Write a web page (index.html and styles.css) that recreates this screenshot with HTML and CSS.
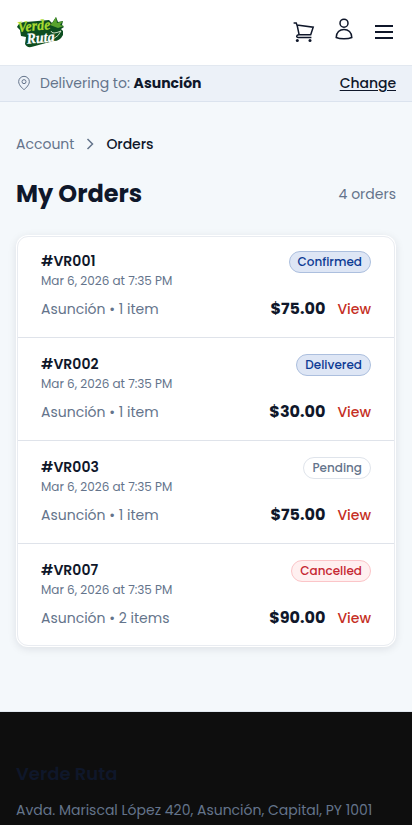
FILE: index.html
```html
<!DOCTYPE html>
<html lang="en">
<head>
<meta charset="utf-8">
<meta name="viewport" content="width=device-width, initial-scale=1">
<title>My Orders</title>
<link rel="stylesheet" href="styles.css">
</head>
<body>
<header class="header">
  <svg class="logo" width="50" height="34" viewBox="0 0 50 34">
    <path d="M1 11Q3 6 10 6L33 4 36 7 40 1 42 6 47 5 46 9 48 11 45 13 47 15 47 19Q44 25 38 25L30 27 19 30Q11 33 9 28L10 21 5 20 4 14Z" fill="#0d4d20"/>
    <path d="M34 9 37 6 40 1 41 7 47 5 44 9 48 10 42 12Z" fill="#58a32e"/>
    <path d="M21 27Q33 26 37 23 43 20 45 15 36 19 35 15" fill="none" stroke="#dcebd3" stroke-width=".9"/>
    <g transform="rotate(-5 20 16)">
      <text class="logo-top" x="2" y="14.5" textLength="33" lengthAdjust="spacingAndGlyphs">Verde</text>
      <text class="logo-bottom" x="10" y="27" textLength="28" lengthAdjust="spacingAndGlyphs">Ruta</text>
    </g>
  </svg>
  <nav class="tools">
    <svg class="icon cart" width="24" height="24" viewBox="0 0 24 24"><path d="M1.6 3h2.6l1.1 3 1.8 8.7M4.8 5l16.4 2.2-2.5 7.5H7.1c-3 0-3 2.7-1 2.7h13.3"/><circle cx="5.3" cy="20.5" r="1.5"/><circle cx="18" cy="20.5" r="1.5"/></svg>
    <svg class="icon user" width="24" height="24" viewBox="0 0 24 24"><circle cx="12" cy="6.2" r="4"/><path d="M4.2 20.5c0-5.2 3.5-8.1 7.8-8.1s7.8 2.9 7.8 8.1c-3.8 1.8-11.8 1.8-15.6 0Z"/></svg>
    <svg class="icon menu" width="24" height="24" viewBox="0 0 24 24"><path d="M3 6h18M3 12h18M3 18h18"/></svg>
  </nav>
</header>
<div class="delivery">
  <svg class="pin" width="16" height="16" viewBox="0 0 24 24"><path d="M20 10c0 6-8 12-8 12S4 16 4 10a8 8 0 0 1 16 0Z"/><circle cx="12" cy="10" r="3"/></svg>
  <span class="delivery-label">Delivering to:</span>
  <strong class="delivery-city">Asunción</strong>
  <a class="change">Change</a>
</div>
<main class="main">
  <nav class="crumbs">
    <span class="crumb">Account</span>
    <svg class="chevron" width="16" height="16" viewBox="0 0 16 16"><path d="m5.5 3 5 5-5 5"/></svg>
    <span class="current">Orders</span>
  </nav>
  <div class="heading"><h1>My Orders</h1><span class="count">4 orders</span></div>
  <section class="orders">
    <article class="order">
      <div class="row top"><div><div class="number">#VR001</div><div class="date">Mar 6, 2026 at 7:35 PM</div></div><span class="badge confirmed">Confirmed</span></div>
      <div class="row bottom"><span class="place">Asunción • 1 item</span><span class="price">$75.00</span><a class="view">View</a></div>
    </article>
    <article class="order">
      <div class="row top"><div><div class="number">#VR002</div><div class="date">Mar 6, 2026 at 7:35 PM</div></div><span class="badge delivered">Delivered</span></div>
      <div class="row bottom"><span class="place">Asunción • 1 item</span><span class="price">$30.00</span><a class="view">View</a></div>
    </article>
    <article class="order">
      <div class="row top"><div><div class="number">#VR003</div><div class="date">Mar 6, 2026 at 7:35 PM</div></div><span class="badge pending">Pending</span></div>
      <div class="row bottom"><span class="place">Asunción • 1 item</span><span class="price">$75.00</span><a class="view">View</a></div>
    </article>
    <article class="order">
      <div class="row top"><div><div class="number">#VR007</div><div class="date">Mar 6, 2026 at 7:35 PM</div></div><span class="badge cancelled">Cancelled</span></div>
      <div class="row bottom"><span class="place">Asunción • 2 items</span><span class="price">$90.00</span><a class="view">View</a></div>
    </article>
  </section>
</main>
<footer class="footer">
  <h2>Verde Ruta</h2>
  <p class="address">Avda. Mariscal López 420, Asunción, Capital, PY 1001</p>
</footer>
</body>
</html>
```
FILE: styles.css
```css
* { box-sizing: border-box; }
body { margin: 0; height: 825px; overflow: hidden; background: #f4f8fb; color: #0f172a; font: 14px/20px Poppins, Inter, sans-serif; white-space: nowrap; }
h1, h2, p { margin: 0; }
.header { height: 66px; padding: 0 16px; background: #fff; border-bottom: 1px solid #e2e8f0; display: flex; align-items: center; justify-content: space-between; }
.logo { display: block; }
.logo-top, .logo-bottom { font: italic 700 15px "Liberation Serif", serif; stroke-width: .2; }
.logo-top { fill: #a9db32; stroke: #a9db32; }
.logo-bottom { fill: #fff; stroke: #fff; }
.tools { display: flex; gap: 16px; margin-top: -1px; }
.icon { fill: none; stroke: #0f172a; stroke-width: 1.5; }
.cart circle { fill: #0f172a; stroke: none; }
.user { margin-top: -3px; }
.menu { stroke-width: 2; }
.delivery { height: 36px; padding: 0 16px 1px; background: #ecf1f8; border-bottom: 1px solid #dbe3ee; display: flex; align-items: center; }
.pin { fill: none; stroke: #64748b; stroke-width: 1.5; margin-right: 8px; }
.delivery-label { color: #64748b; width: 93.6px; }
.delivery-city { font-weight: 700; }
.change { margin-left: auto; font-weight: 500; letter-spacing: -.05px; text-decoration: underline; text-underline-offset: 2px; }
.main { height: 609px; padding: 32px 16px 0; }
.crumbs { display: flex; align-items: center; }
.crumb { color: #64748b; width: 66.4px; }
.chevron { fill: none; stroke: #64748b; stroke-width: 1.5; margin-right: 8px; }
.current { font-weight: 500; letter-spacing: -.05px; }
.heading { height: 32px; margin-top: 24px; display: flex; align-items: center; justify-content: space-between; }
h1 { font-size: 24px; line-height: 32px; font-weight: 700; }
.count { color: #64748b; }
.orders { position: relative; height: 412px; margin-top: 25px; background: #fff; border-radius: 12px; box-shadow: 0 2px 8px #0f172a1a; }
.orders::after { content: ""; position: absolute; inset: 1px; border: 1px solid #e9ecf1; border-radius: 11px; pointer-events: none; }
.order { height: 103px; padding: 16px 24px; margin: 0 1px; border-bottom: 1px solid #dfe3ea; }
.order:last-child { border-bottom: 0; }
.row { display: flex; }
.top { height: 38px; align-items: flex-start; justify-content: space-between; }
.number { font-weight: 600; }
.date { margin-top: 2px; color: #64748b; font-size: 12px; line-height: 16px; }
.bottom { height: 24px; margin-top: 8px; align-items: center; }
.place { color: #64748b; }
.price { margin-left: auto; font-size: 16px; font-weight: 700; }
.view { color: #c52f24; margin-left: 12px; font-weight: 500; }
.badge { height: 22px; padding: 0 8px; border: 1px solid; border-radius: 11px; font-size: 12px; line-height: 20px; font-weight: 500; }
.confirmed, .delivered { color: #0d3b94; background: #dee6f5; border-color: #acbfde; }
.pending { color: #64748b; background: #fff; border-color: #dfe4eb; }
.cancelled { color: #c62832; background: #fff0f0; border-color: #fbc5c8; }
.footer { height: 114px; padding: 48px 16px 0; background: #0e0e0e; border-top: 1px solid #e2e8f0; }
h2 { font-size: 18px; line-height: 28px; font-weight: 600; color: #0f172a; }
.address { margin-top: 12px; color: #64748b; }
```
